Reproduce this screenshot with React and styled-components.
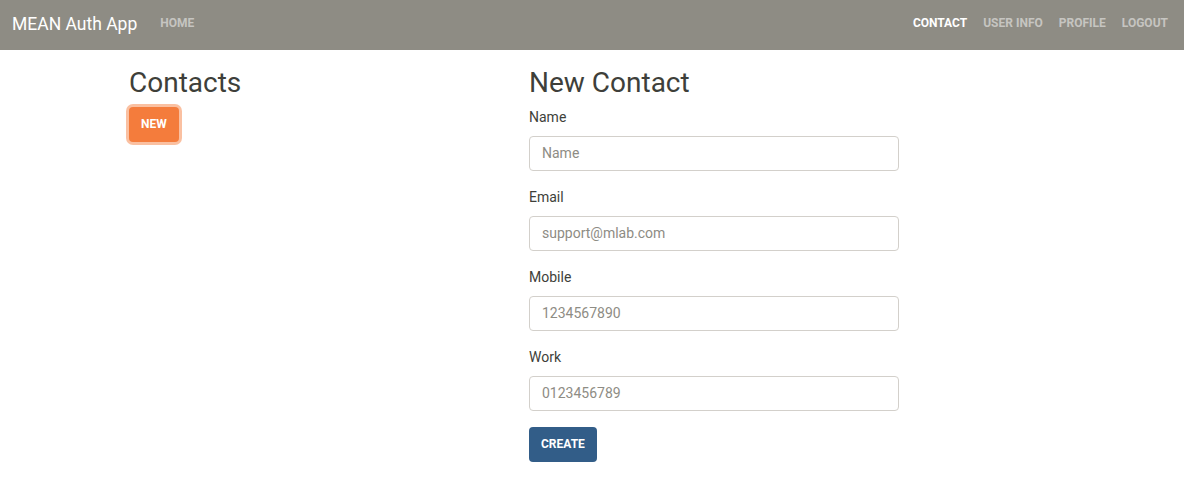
import * as React from 'react';
import styled, { createGlobalStyle } from 'styled-components';

const GlobalStyle = createGlobalStyle`
  body {
    margin: 0;
    background: #ffffff;
    font-family: 'Roboto', 'Liberation Sans', sans-serif;
    font-size: 14px;
    color: #3e3f3a;
  }
  * {
    box-sizing: border-box;
  }
`;

const Navbar = styled.nav`
  display: flex;
  align-items: center;
  justify-content: space-between;
  height: 50px;
  padding: 0 16px 0 12px;
  background-color: #8e8c84;
`;

const NavGroup = styled.div`
  display: flex;
  align-items: center;
  gap: ${(props) => props.gap || '16px'};
`;

const Brand = styled.a`
  color: #ffffff;
  font-size: 17.5px;
  line-height: 22px;
  text-decoration: none;
  margin-top: -3px;
`;

const NavLink = styled.a`
  color: ${(props) => (props.active ? '#ffffff' : 'rgba(255, 255, 255, 0.5)')};
  font-size: 12px;
  font-weight: 700;
  text-transform: uppercase;
  text-decoration: none;
  line-height: 18px;
  margin-top: -4px;
`;

const Main = styled.main`
  display: flex;
  padding: 16px 0 0 114px;
`;

const Column = styled.section`
  width: 400px;
  padding: 0 15px;
`;

const Heading = styled.h2`
  margin: 0 0 7px;
  font-size: 28px;
  font-weight: 400;
  line-height: 1.2;
  color: #3e3f3a;
`;

const Button = styled.button`
  display: inline-block;
  height: 35px;
  padding: 0 12px;
  border: none;
  border-radius: 4px;
  font-family: 'Roboto', 'Liberation Sans', sans-serif;
  font-size: 12px;
  font-weight: 700;
  text-transform: uppercase;
  color: #ffffff;
  background-color: ${(props) => props.color};
  box-shadow: ${(props) => (props.focused ? `0 0 0 3px ${props.ring}` : 'none')};
  cursor: pointer;
`;

const Field = styled.div`
  margin-bottom: 16px;
`;

const Label = styled.label`
  display: block;
  margin-bottom: 8px;
  line-height: 21px;
  font-size: 14px;
  color: #3e3f3a;
`;

const Input = styled.input`
  display: block;
  width: 370px;
  height: 35px;
  padding: 6px 12px;
  border: 1px solid #d3d0cb;
  border-radius: 4px;
  font-family: 'Roboto', 'Liberation Sans', sans-serif;
  font-size: 14px;
  color: #3e3f3a;

  &::placeholder {
    color: #8e8c84;
  }
`;

const fields = [
  { label: 'Name', placeholder: 'Name' },
  { label: 'Email', placeholder: 'support@mlab.com' },
  { label: 'Mobile', placeholder: '1234567890' },
  { label: 'Work', placeholder: '0123456789' },
];

export default function App() {
  return (
    <>
      <GlobalStyle />
      <Navbar>
        <NavGroup gap="23px">
          <Brand href="#">MEAN Auth App</Brand>
          <NavLink href="#">Home</NavLink>
        </NavGroup>
        <NavGroup>
          <NavLink href="#" active>Contact</NavLink>
          <NavLink href="#">User Info</NavLink>
          <NavLink href="#">Profile</NavLink>
          <NavLink href="#">Logout</NavLink>
        </NavGroup>
      </Navbar>
      <Main>
        <Column>
          <Heading>Contacts</Heading>
          <Button color="#f47c3c" ring="rgba(246, 150, 99, 0.6)" focused>
            New
          </Button>
        </Column>
        <Column>
          <Heading>New Contact</Heading>
          <form onSubmit={(e) => e.preventDefault()}>
            {fields.map((f) => (
              <Field key={f.label}>
                <Label>{f.label}</Label>
                <Input type="text" placeholder={f.placeholder} />
              </Field>
            ))}
            <Button color="#325d88" type="submit">
              Create
            </Button>
          </form>
        </Column>
      </Main>
    </>
  );
}
